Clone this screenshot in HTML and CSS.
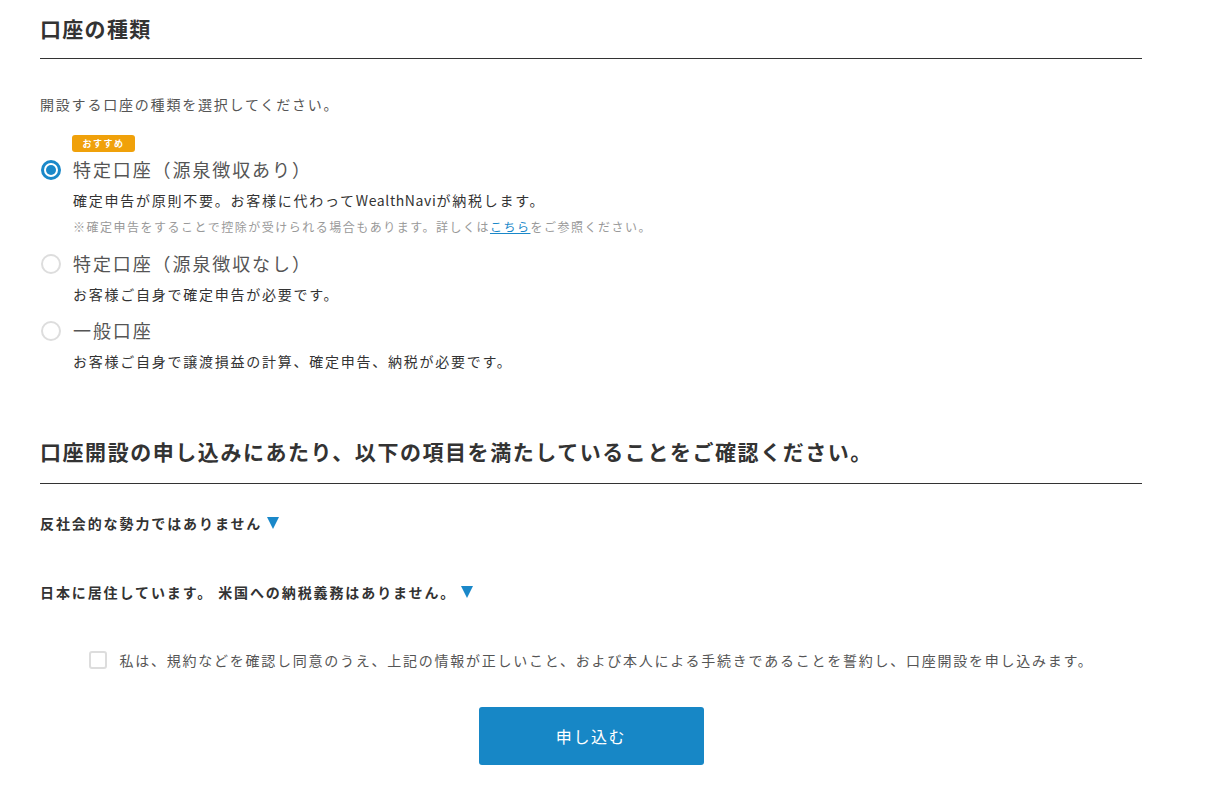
FILE: index.html
```html
<!DOCTYPE html>
<html lang="ja">
<head>
  <meta charset="UTF-8" />
  <meta name="viewport" content="width=device-width, initial-scale=1.0" />
  <title>口座開設</title>
  <link rel="stylesheet" href="styles.css">
</head>
<body>
  <main class="form">
    <section class="block">
      <h2 class="block-title">口座の種類</h2>
      <p class="lead">開設する口座の種類を選択してください。</p>

      <div class="option option-first">
        <span class="badge">おすすめ</span>
        <label class="option-head">
          <span class="radio checked"></span>
          <span class="option-label">特定口座（源泉徴収あり）</span>
        </label>
        <p class="option-desc">確定申告が原則不要。お客様に代わって<span class="latin">WealthNavi</span>が納税します。</p>
        <p class="option-note">※確定申告をすることで控除が受けられる場合もあります。詳しくは<a href="#">こちら</a>をご参照ください。</p>
      </div>

      <div class="option">
        <label class="option-head">
          <span class="radio"></span>
          <span class="option-label">特定口座（源泉徴収なし）</span>
        </label>
        <p class="option-desc">お客様ご自身で確定申告が必要です。</p>
      </div>

      <div class="option">
        <label class="option-head">
          <span class="radio"></span>
          <span class="option-label">一般口座</span>
        </label>
        <p class="option-desc">お客様ご自身で譲渡損益の計算、確定申告、納税が必要です。</p>
      </div>
    </section>

    <section class="block block-confirm">
      <h2 class="block-title">口座開設の申し込みにあたり、以下の項目を満たしていることをご確認ください。</h2>
      <p class="check-item">反社会的な勢力ではありません<span class="toggle"></span></p>
      <p class="check-item check-item-next">日本に居住しています。 米国への納税義務はありません。<span class="toggle"></span></p>

      <label class="agree">
        <span class="checkbox"></span>
        <span class="agree-text">私は、規約などを確認し同意のうえ、上記の情報が正しいこと、および本人による手続きであることを誓約し、口座開設を申し込みます。</span>
      </label>

      <div class="actions">
        <button class="submit" type="button">申し込む</button>
      </div>
    </section>
  </main>
</body>
</html>
```

FILE: styles.css
```css
* {
  margin: 0;
  padding: 0;
  box-sizing: border-box;
}

body {
  font-family: "Noto Sans CJK JP", "Noto Sans", sans-serif;
  background: #fff;
  color: #333;
}

.form {
  width: 1102px;
  margin-left: 40px;
}

.block-title {
  font-size: 21px;
  font-weight: bold;
  line-height: 32px;
  letter-spacing: 1.3px;
  color: #333;
  padding: 12px 0 14px;
  border-bottom: 1px solid #333;
}

.block-confirm .block-title {
  letter-spacing: 1.55px;
  padding-bottom: 16px;
}

.lead {
  margin-top: 35px;
  font-size: 14px;
  line-height: 20px;
  letter-spacing: 1.8px;
  color: #555;
}

.option {
  margin-top: 15px;
}

.option-first {
  margin-top: 21px;
}

.option + .option:last-child {
  margin-top: 14px;
}

.badge {
  display: block;
  margin-left: 32px;
  width: 63px;
  height: 17px;
  line-height: 17px;
  text-align: center;
  background: #f0a10a;
  color: #fff;
  font-size: 9px;
  font-weight: bold;
  letter-spacing: 1.5px;
  border-radius: 3px;
}

.option-first .option-head {
  margin-top: 5px;
}

.option-head {
  display: flex;
  align-items: center;
  gap: 12px;
  height: 24px;
  cursor: pointer;
}

.radio {
  width: 20px;
  height: 20px;
  margin-left: 1px;
  border-radius: 50%;
  border: 2px solid #ddd;
  background: #fff;
  flex-shrink: 0;
  position: relative;
  top: 1px;
}

.radio.checked {
  border: 3px solid #1a88c9;
}

.radio.checked::after {
  content: '';
  position: absolute;
  top: 2px;
  left: 2px;
  width: 10px;
  height: 10px;
  border-radius: 50%;
  background: #1a88c9;
}

.option-label {
  font-size: 18px;
  line-height: 24px;
  letter-spacing: 1.9px;
  color: #555;
}

.option-desc {
  margin-top: 9px;
  padding-left: 33px;
  font-size: 14px;
  line-height: 20px;
  letter-spacing: 1.75px;
  color: #333;
}

.option-desc .latin {
  letter-spacing: 0.6px;
}

.option-note {
  margin-top: 8px;
  padding-left: 33px;
  font-size: 12px;
  line-height: 18px;
  letter-spacing: 1.5px;
  color: #999;
}

.option-note a {
  color: #1a88c9;
  text-decoration: underline;
}

.block-confirm {
  margin-top: 52px;
}

.check-item {
  margin-top: 29px;
  font-size: 14px;
  font-weight: bold;
  line-height: 20px;
  letter-spacing: 1.9px;
  color: #333;
  display: flex;
  align-items: center;
}

.check-item-next {
  margin-top: 49px;
}

.toggle {
  display: inline-block;
  margin-left: 5px;
  width: 0;
  height: 0;
  border-left: 6.5px solid transparent;
  border-right: 6.5px solid transparent;
  border-top: 12px solid #1a88c9;
}

.agree {
  margin-top: 48px;
  display: flex;
  justify-content: center;
  align-items: center;
  gap: 13px;
  height: 20px;
  cursor: pointer;
}

.checkbox {
  width: 18px;
  height: 18px;
  border: 2px solid #ddd;
  border-radius: 3px;
  background: #fff;
  flex-shrink: 0;
}

.agree-text {
  font-size: 14px;
  line-height: 20px;
  letter-spacing: 1.75px;
  color: #555;
}

.actions {
  margin-top: 37px;
  display: flex;
  justify-content: center;
}

.submit {
  width: 225px;
  height: 58px;
  border: none;
  border-radius: 3px;
  background: #1787c6;
  color: #fff;
  font-family: inherit;
  font-size: 16px;
  letter-spacing: 0.1em;
  cursor: pointer;
}
```
